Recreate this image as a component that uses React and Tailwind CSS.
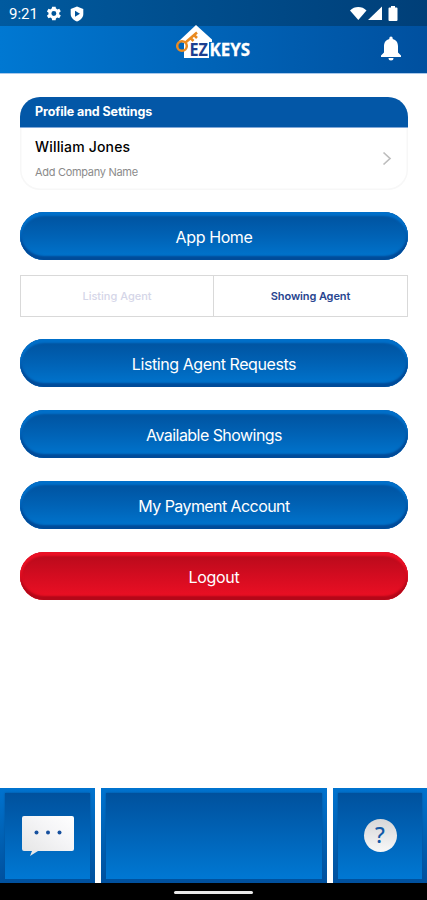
import React, { useState } from 'react';

const actions = [
  { label: 'Listing Agent Requests', tracking: 'tracking-[-0.42px]' },
  { label: 'Available Showings', tracking: 'tracking-[-0.55px]' },
  { label: 'My Payment Account', tracking: 'tracking-[-0.57px]' },
];

function StatusBar() {
  return (
    <div className="flex h-[26px] items-center bg-gradient-to-r from-[#005a9f] to-[#003f78] pr-[28px] pl-[9px] text-white">
      <span className="w-[29px] pt-[2px] font-['Roboto',sans-serif] text-[15px] leading-none">9:21</span>
      <svg className="ml-[7px] h-[17px] w-[17px]" viewBox="0 0 24 24" fill="currentColor">
        <path d="M20 13.2a8 8 0 0 0 0-2.4l2.3-1.8-2.2-3.8-2.7 1.1a8 8 0 0 0-2-1.2L15 2.3h-5l-.4 2.8a8 8 0 0 0-2 1.2L4.9 5.200 2.700 9 5 10.800a8 8 0 0 0 0 2.400L2.700 15l2.200 3.800 2.700-1.100a8 8 0 0 0 2 1.200l.4 2.800h5l.4-2.800a8 8 0 0 0 2-1.200l2.700 1.100 2.200-3.800zM12.500 15.500a3.500 3.500 0 1 1 0-7 3.500 3.500 0 0 1 0 7z" />
      </svg>
      <svg className="mt-[2px] ml-[8px] h-[16px] w-[14px]" viewBox="0 0 14 16">
        <path d="M7 .5 13.300 3v5c0 3.500-2.700 6-6.300 7.500C3.400 14 .7 11.500.7 8V3z" fill="white" />
        <path d="M5 4.700v6l5-3z" fill="#00539a" />
      </svg>
      <svg className="mt-[1px] ml-auto h-[15px] w-[17px]" viewBox="0 0 17 15" fill="currentColor">
        <path d="M0 4.500C4.500-.1 12-.1 16.500 4.500L8.300 14z" />
      </svg>
      <svg className="mt-[1px] ml-[1px] h-[15px] w-[14px]" viewBox="0 0 14 15" fill="currentColor">
        <path d="M14 .5V14H0z" />
      </svg>
      <svg className="mt-[1px] mr-[1px] ml-[6px] h-[15px] w-[10px]" viewBox="0 0 10 15" fill="currentColor">
        <path d="M3 0h4v1.500h1.500Q9.500 1.500 9.500 2.500V14q0 1-1 1h-7q-1 0-1-1V2.500q0-1 1-1H3z" />
      </svg>
    </div>
  );
}

function Logo() {
  return (
    <svg className="relative -top-[8px] h-[38px] w-[78px]" viewBox="0 0 78 38">
      <path d="M22 2 38 16.500V19h-3v16H10V20l-5-2z" fill="white" />
      <g fill="none" stroke="#e98a20" strokeWidth="2.500">
        <circle cx="8" cy="23" r="4.800" />
        <path d="M11.500 19.500 23 9.500M16.500 15l3 3M20 12l3 3" />
      </g>
      <text x="15.500" y="33" fill="#1c3f90" fontFamily="Open Sans, sans-serif" fontSize="17" fontWeight="700" textLength="18.500" lengthAdjust="spacingAndGlyphs">EZ</text>
      <text x="35.500" y="33" fill="white" stroke="white" strokeWidth="0.300" fontFamily="Open Sans, sans-serif" fontSize="17" fontWeight="700" textLength="40.500" lengthAdjust="spacingAndGlyphs">KEYS</text>
    </svg>
  );
}

function Header() {
  return (
    <header className="grid h-[48px] grid-cols-3 items-center border-b border-[#a9c8ea] bg-gradient-to-r from-[#0078d2] via-[#0063b7] to-[#00509f]">
      <span />
      <div className="flex justify-center">
        <Logo />
      </div>
      <button className="mr-[25px] justify-self-end text-white" aria-label="Notifications">
        <svg className="mb-[2px] h-[25px] w-[22px]" viewBox="0 0 22 25" fill="currentColor">
          <path d="M9.300 3V2.200a1.700 1.700 0 0 1 3.400 0V3c3.500.8 5.300 3.700 5.300 7.200v6.300l3 3V21H1v-1.500l3-3v-6.300C4 6.700 5.800 3.800 9.300 3zM8.500 22h5a2.500 2.500 0 0 1-5 0z" />
        </svg>
      </button>
    </header>
  );
}

function ProfileCard() {
  return (
    <section className="h-[93px] overflow-hidden rounded-[20px] bg-white shadow-[inset_0_0_0_1.5px_#f7f7f7]">
      <div className="flex h-[31px] items-center border-b border-[#81a8d8] bg-[#0357a7] pt-[1px] pl-[15px] text-[12.5px] font-bold tracking-[-0.1px] text-white">
        Profile and Settings
      </div>
      <div className="flex h-[61px] items-center justify-between pr-[16px] pl-[15px]">
        <div>
          <p className="text-[14px] leading-[18px] font-medium tracking-[0.18px] text-black">William Jones</p>
          <p className="mt-[9px] text-[11px] leading-[15px] tracking-[-0.3px] text-[#8b8b8b]">Add Company Name</p>
        </div>
        <svg className="h-[15px] w-[10px]" viewBox="0 0 10 15" fill="none" stroke="#bdbdbd" strokeWidth="1.700">
          <path d="m1.500 1.500 6.500 6-6.500 6" />
        </svg>
      </div>
    </section>
  );
}

function PillButton({ children, tracking, danger, className = '' }) {
  const tone = danger
    ? 'from-[#b60a1b] via-[#d40c20] to-[#ee1024] shadow-[inset_0_4px_2px_#ea1024,inset_0_-4px_2px_#b40819,inset_2px_0_2px_#df1024,inset_-2px_0_2px_#d30c20]'
    : 'from-[#00519d] via-[#0062b5] to-[#0076d0] shadow-[inset_0_4px_2px_#006fc9,inset_0_-4px_2px_#004b99,inset_2px_0_2px_#0061b5,inset_-2px_0_2px_#005aa9]';

  return (
    <button className={`flex h-[48px] w-full items-center justify-center rounded-full bg-gradient-to-b pt-[2px] text-[16px] text-white ${tone} ${tracking} ${className}`}>
      {children}
    </button>
  );
}

function AgentToggle() {
  const [agent, setAgent] = useState('showing');
  const active = 'font-semibold text-[#28458f]';
  const inactive = 'font-medium text-[#d5d6e8]';

  return (
    <div className="mt-[15px] grid h-[42px] grid-cols-2 border border-[#d9d9d9] text-[11px]">
      <button onClick={() => setAgent('listing')} className={`border-r border-[#d9d9d9] ${agent === 'listing' ? active : inactive}`}>
        Listing Agent
      </button>
      <button onClick={() => setAgent('showing')} className={`tracking-[-0.1px] ${agent === 'showing' ? active : inactive}`}>
        Showing Agent
      </button>
    </div>
  );
}

function FooterTile({ children, className = '', label }) {
  return (
    <button aria-label={label} className={`bg-gradient-to-b from-[#0073cf] via-[#0062b5] to-[#00509d] p-[5px] pb-[4px] ${className}`}>
      <span className="flex h-full items-center justify-center bg-gradient-to-b from-[#00519d] via-[#0064b8] to-[#0078d3] shadow-[0_0_2px_#00519d]">
        {children}
      </span>
    </button>
  );
}

function Footer() {
  return (
    <footer>
      <div className="flex h-[95px] gap-[6px]">
        <FooterTile className="w-[95px]" label="Messages">
          <svg className="h-[42px] w-[54px]" viewBox="0 0 54 42">
            <defs>
              <linearGradient id="bubble" x1="0" y1="1" x2="1" y2="0">
                <stop stopColor="#e4e4e4" />
                <stop offset=".6" stopColor="#f5f5f7" />
                <stop offset="1" stopColor="white" />
              </linearGradient>
            </defs>
            <path d="M3 1h48q2 0 2 2v31q0 2-2 2H17l-8 5 2-5H3q-2 0-2-2V3q0-2 2-2z" fill="url(#bubble)" />
            <g fill="#16509e">
              <circle cx="15.500" cy="17.500" r="2" />
              <circle cx="27" cy="17.500" r="2" />
              <circle cx="38.500" cy="17.500" r="2" />
            </g>
          </svg>
        </FooterTile>
        <FooterTile className="w-[226px]" label="Unlock" />
        <FooterTile className="w-[94px]" label="Help">
          <span className="mb-[2px] flex h-[33px] w-[33px] items-center justify-center rounded-full bg-gradient-to-b from-[#d6d6d8] to-[#f8f8f8] pb-[1px] font-['Noto_Sans',sans-serif] text-[22px] font-medium text-[#1259a7]">
            ?
          </span>
        </FooterTile>
      </div>
      <div className="flex h-[17px] justify-center bg-black pt-[8px]">
        <div className="h-[3px] w-[79px] rounded-full bg-[#e8e8e8]" />
      </div>
    </footer>
  );
}

export default function App() {
  return (
    <div className="flex h-[900px] w-[427px] flex-col bg-white font-['Inter',sans-serif]">
      <StatusBar />
      <Header />
      <main className="flex-1 pt-[23px] pr-[19px] pl-[20px]">
        <ProfileCard />
        <PillButton className="mt-[22px]" tracking="tracking-[-0.4px]">App Home</PillButton>
        <AgentToggle />
        <div className="mt-[22px] flex flex-col gap-[23px]">
          {actions.map((action) => (
            <PillButton key={action.label} tracking={action.tracking}>{action.label}</PillButton>
          ))}
          <PillButton danger tracking="tracking-[-0.3px]">Logout</PillButton>
        </div>
      </main>
      <Footer />
    </div>
  );
}
